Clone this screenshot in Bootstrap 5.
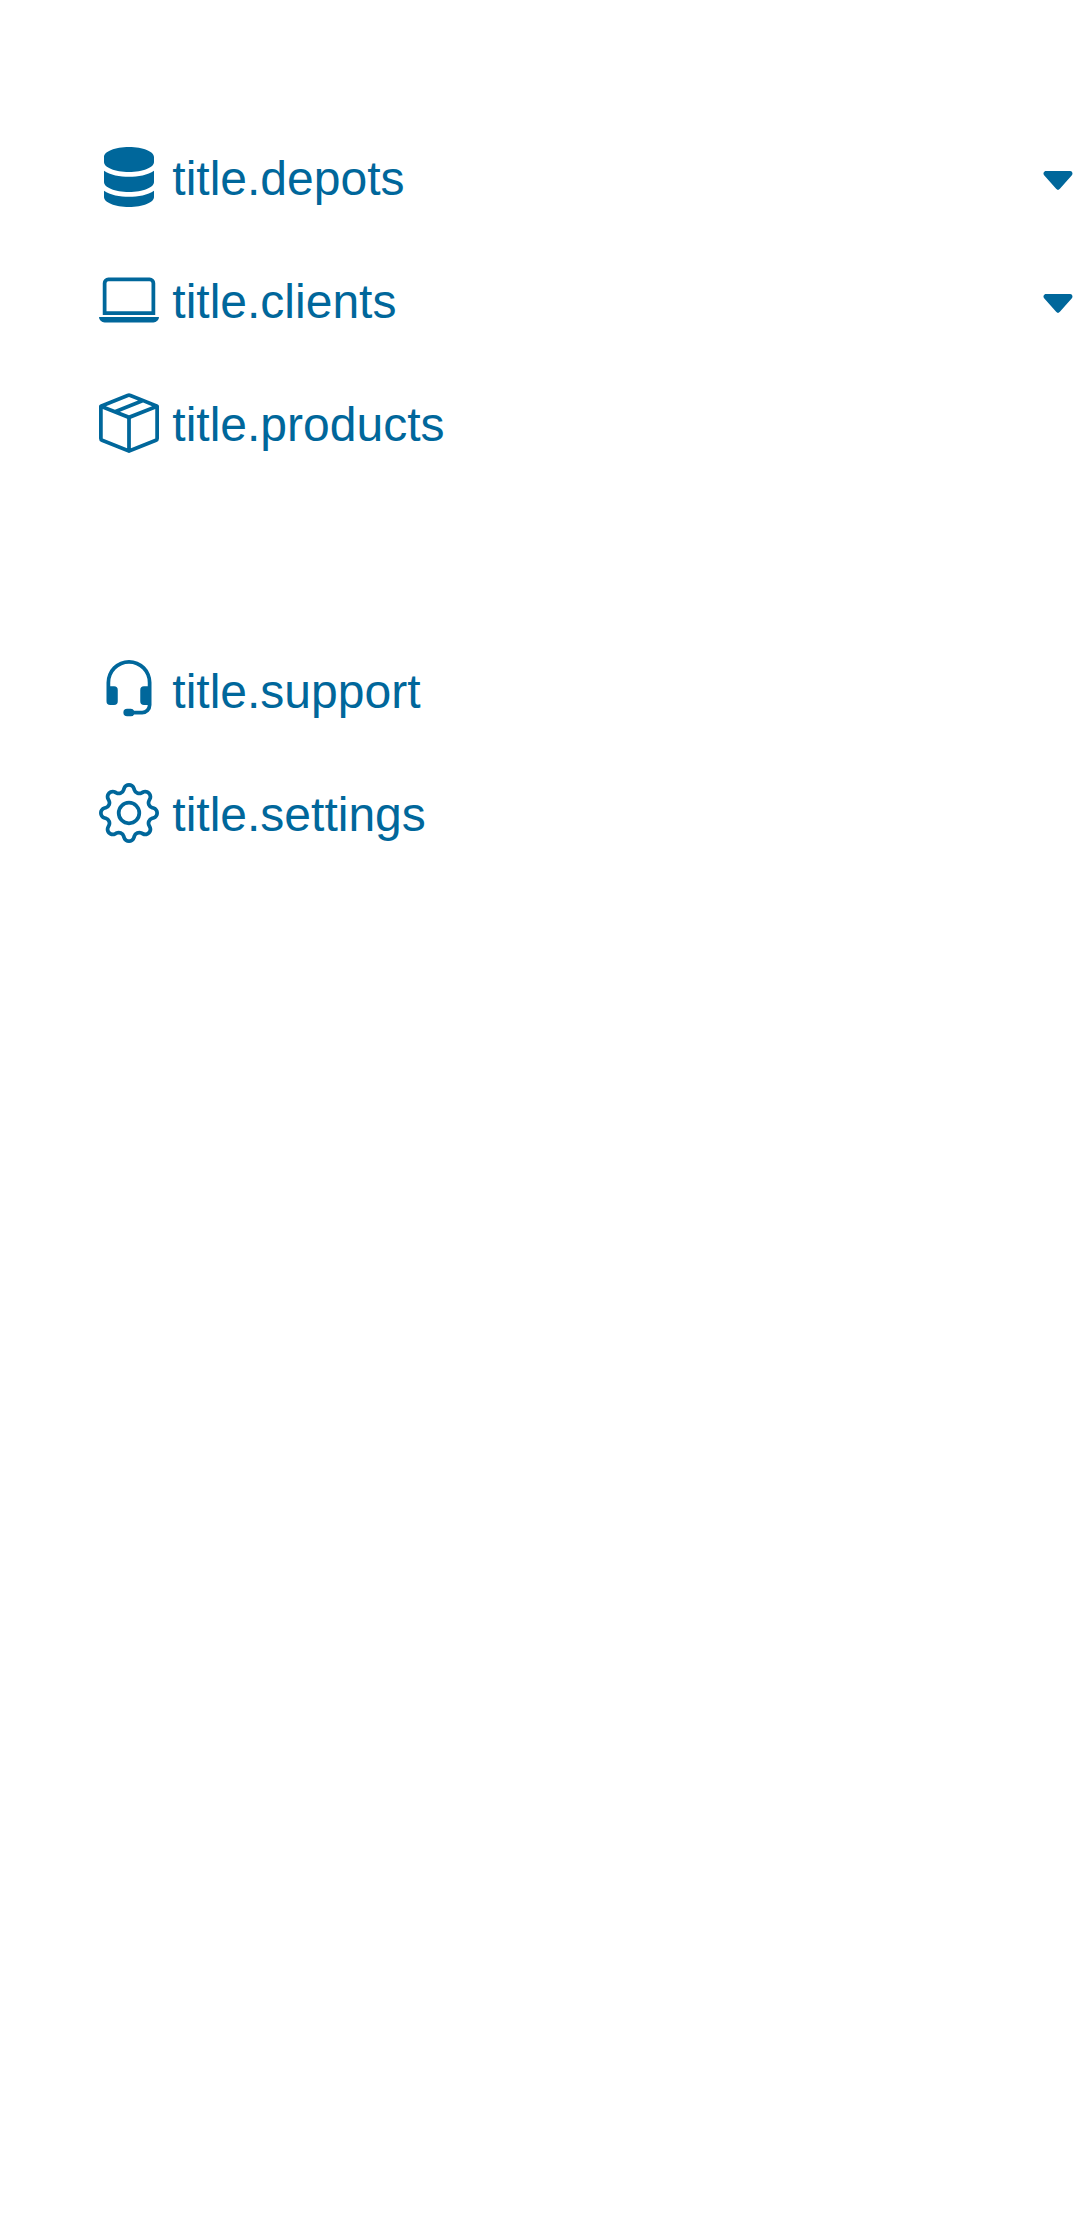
<!DOCTYPE html>
<html lang="en">
<head>
<meta charset="utf-8">
<meta name="viewport" content="width=device-width, initial-scale=1">
<title>Menu</title>
<link href="https://cdn.jsdelivr.net/npm/bootstrap@5.3.0/dist/css/bootstrap.min.css" rel="stylesheet">
<style>
body{font-family:"Liberation Sans",Arial,sans-serif;background:#fff}
.side-menu{padding:118px 2.5px 0 99px}
.side-menu .nav-link{padding:25px 0 26px;font-size:48px;line-height:72px;color:#00679b}
.menu-icon{width:60px;height:60px;vertical-align:-12px;fill:currentColor}
.menu-caret{width:40px;height:40px;margin-top:4px;fill:currentColor}
.menu-lower{margin-top:144px}
</style>
</head>
<body>
<nav class="side-menu">
  <ul class="nav flex-column flex-nowrap">
    <li><a class="nav-link d-flex align-items-center justify-content-between" href="#">
      <span><svg class="menu-icon" viewBox="0 0 60 60"><path d="M5 10C5 4.500 16 0 30 0s25 4.500 25 10v5c0 5.500-11 10-25 10S5 20.500 5 15zM5 23.700C11 28 21 29.800 30 29.800S49 28 55 23.700V35c0 5.500-11 10-25 10S5 40.500 5 35zM5 43.700C11 48 21 49.800 30 49.800S49 48 55 43.700V50c0 5.500-11 10-25 10S5 55.500 5 50z"/></svg> title.depots</span>
      <svg class="menu-caret" viewBox="0 0 16 16"><path d="M7.247 11.140 2.451 5.658C1.885 5.013 2.345 4 3.204 4h9.592a1 1 0 0 1 .753 1.659l-4.796 5.480a1 1 0 0 1-1.506 0z"/></svg>
    </a></li>
    <li><a class="nav-link d-flex align-items-center justify-content-between" href="#">
      <span><svg class="menu-icon" viewBox="0 0 16 16"><path d="M13.500 3a.5.5 0 0 1 .5.5V11H2V3.500a.5.5 0 0 1 .5-.5h11zm-11-1A1.500 1.500 0 0 0 1 3.500V12h14V3.500A1.500 1.500 0 0 0 13.500 2h-11zM0 12.500h16a1.500 1.500 0 0 1-1.500 1.500h-13A1.500 1.500 0 0 1 0 12.500z"/></svg> title.clients</span>
      <svg class="menu-caret" viewBox="0 0 16 16"><path d="M7.247 11.140 2.451 5.658C1.885 5.013 2.345 4 3.204 4h9.592a1 1 0 0 1 .753 1.659l-4.796 5.480a1 1 0 0 1-1.506 0z"/></svg>
    </a></li>
    <li><a class="nav-link" href="#">
      <span><svg class="menu-icon" viewBox="0 0 16 16"><path d="M8.186 1.113a.5.5 0 0 0-.372 0L1.846 3.500l2.404.961L10.404 2l-2.218-.887zm3.564 1.426L5.596 5 8 5.961 14.154 3.500l-2.404-.961zm3.250 1.700-6.500 2.600v7.922l6.500-2.600V4.240zM7.500 14.762V6.838L1 4.239v7.923l6.500 2.600zM7.443.184a1.500 1.500 0 0 1 1.114 0l7.129 2.852A.5.5 0 0 1 16 3.500v8.662a1 1 0 0 1-.629.928l-7.185 2.874a.5.5 0 0 1-.372 0L.63 13.090a1 1 0 0 1-.63-.928V3.500a.5.5 0 0 1 .314-.464L7.443.184z"/></svg> title.products</span>
    </a></li>
  </ul>
  <ul class="nav flex-column flex-nowrap menu-lower">
    <li><a class="nav-link" href="#">
      <span><svg class="menu-icon" viewBox="0 0 16 16"><path d="M8 1a5 5 0 0 0-5 5v1h1a1 1 0 0 1 1 1v3a1 1 0 0 1-1 1H3a1 1 0 0 1-1-1V6a6 6 0 1 1 12 0v6a2.500 2.500 0 0 1-2.500 2.500H9.366a1 1 0 0 1-.866.5h-1a1 1 0 1 1 0-2h1a1 1 0 0 1 .866.5H11.500A1.500 1.500 0 0 0 13 12h-1a1 1 0 0 1-1-1V8a1 1 0 0 1 1-1h1V6a5 5 0 0 0-5-5z"/></svg> title.support</span>
    </a></li>
    <li><a class="nav-link" href="#">
      <span><svg class="menu-icon" viewBox="0 0 16 16"><path d="M8 4.754a3.246 3.246 0 1 0 0 6.492 3.246 3.246 0 0 0 0-6.492zM5.754 8a2.246 2.246 0 1 1 4.492 0 2.246 2.246 0 0 1-4.492 0z"/><path d="M9.796 1.343c-.527-1.790-3.065-1.790-3.592 0l-.094.319a.873.873 0 0 1-1.255.520l-.292-.160c-1.640-.892-3.433.902-2.540 2.541l.159.292a.873.873 0 0 1-.520 1.255l-.319.094c-1.790.527-1.790 3.065 0 3.592l.319.094a.873.873 0 0 1 .520 1.255l-.160.292c-.892 1.640.901 3.434 2.541 2.540l.292-.159a.873.873 0 0 1 1.255.520l.094.319c.527 1.790 3.065 1.790 3.592 0l.094-.319a.873.873 0 0 1 1.255-.520l.292.160c1.640.893 3.434-.902 2.540-2.541l-.159-.292a.873.873 0 0 1 .520-1.255l.319-.094c1.790-.527 1.790-3.065 0-3.592l-.319-.094a.873.873 0 0 1-.520-1.255l.160-.292c.893-1.640-.902-3.433-2.541-2.540l-.292.159a.873.873 0 0 1-1.255-.520l-.094-.319zm-2.633.283c.246-.835 1.428-.835 1.674 0l.094.319a1.873 1.873 0 0 0 2.693 1.115l.291-.160c.764-.415 1.600.420 1.184 1.185l-.159.292a1.873 1.873 0 0 0 1.116 2.692l.318.094c.835.246.835 1.428 0 1.674l-.319.094a1.873 1.873 0 0 0-1.115 2.693l.160.291c.415.764-.420 1.600-1.185 1.184l-.291-.159a1.873 1.873 0 0 0-2.693 1.116l-.094.318c-.246.835-1.428.835-1.674 0l-.094-.319a1.873 1.873 0 0 0-2.692-1.115l-.292.160c-.764.415-1.600-.420-1.184-1.185l.159-.291A1.873 1.873 0 0 0 1.945 8.930l-.319-.094c-.835-.246-.835-1.428 0-1.674l.319-.094A1.873 1.873 0 0 0 3.060 4.377l-.160-.292c-.415-.764.420-1.600 1.185-1.184l.292.159a1.873 1.873 0 0 0 2.692-1.115l.094-.319z"/></svg> title.settings</span>
    </a></li>
  </ul>
</nav>
<script src="https://cdn.jsdelivr.net/npm/bootstrap@5.3.0/dist/js/bootstrap.bundle.min.js"></script>
</body>
</html>
